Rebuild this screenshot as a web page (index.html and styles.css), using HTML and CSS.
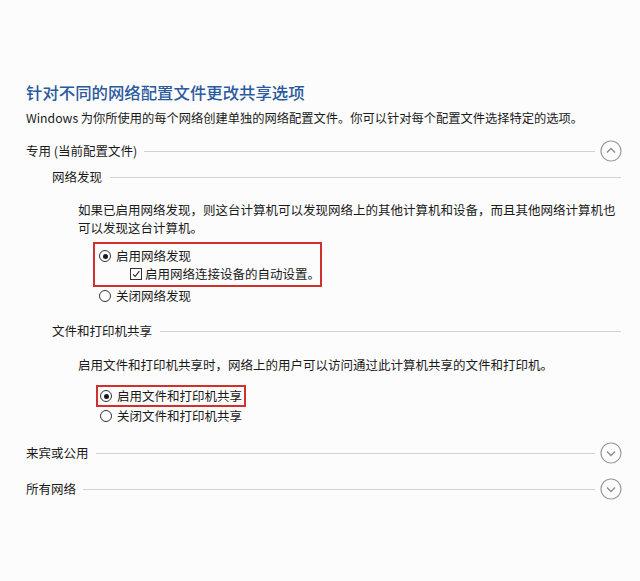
FILE: index.html
```html
<!DOCTYPE html>
<html lang="zh-CN">
<head>
<meta charset="utf-8">
<link rel="stylesheet" href="styles.css">
</head>
<body>
<div class="page">
  <h1 class="title">针对不同的网络配置文件更改共享选项</h1>
  <p class="desc">Windows 为你所使用的每个网络创建单独的网络配置文件。你可以针对每个配置文件选择特定的选项。</p>

  <div class="section-head first">
    <span class="section-label">专用 (当前配置文件)</span>
    <span class="rule"></span>
    <svg class="toggle" viewBox="0 0 22 22" width="22" height="22"><circle cx="11" cy="11" r="10" fill="none" stroke="#9a9a9a" stroke-width="1.2"/><path d="M7 12.5 L11 8.5 L15 12.5" fill="none" stroke="#8a8a8a" stroke-width="1.3"/></svg>
  </div>

  <div class="sub-head sub-first">
    <span class="sub-label">网络发现</span>
    <span class="rule"></span>
  </div>
  <p class="para para-first">如果已启用网络发现，则这台计算机可以发现网络上的其他计算机和设备，而且其他网络计算机也可以发现这台计算机。</p>

  <div class="hl-box hl-one">
    <div class="opt"><span class="radio checked"></span><span>启用网络发现</span></div>
    <div class="opt opt-check"><span class="check"><svg viewBox="0 0 12 12" width="12" height="12"><path d="M2.5 6.5 L5 9 L10 2.5" fill="none" stroke="#222" stroke-width="1.3"/></svg></span><span>启用网络连接设备的自动设置。</span></div>
  </div>
  <div class="opt opt-plain"><span class="radio"></span><span>关闭网络发现</span></div>

  <div class="sub-head sub-second">
    <span class="sub-label">文件和打印机共享</span>
    <span class="rule"></span>
  </div>
  <p class="para para-second">启用文件和打印机共享时，网络上的用户可以访问通过此计算机共享的文件和打印机。</p>

  <div class="hl-box hl-two">
    <div class="opt"><span class="radio checked"></span><span>启用文件和打印机共享</span></div>
  </div>
  <div class="opt opt-plain2"><span class="radio"></span><span>关闭文件和打印机共享</span></div>

  <div class="section-head guest">
    <span class="section-label">来宾或公用</span>
    <span class="rule"></span>
    <svg class="toggle" viewBox="0 0 22 22" width="22" height="22"><circle cx="11" cy="11" r="10" fill="none" stroke="#9a9a9a" stroke-width="1.2"/><path d="M7 9.5 L11 13.5 L15 9.5" fill="none" stroke="#8a8a8a" stroke-width="1.3"/></svg>
  </div>
  <div class="section-head all">
    <span class="section-label">所有网络</span>
    <span class="rule"></span>
    <svg class="toggle" viewBox="0 0 22 22" width="22" height="22"><circle cx="11" cy="11" r="10" fill="none" stroke="#9a9a9a" stroke-width="1.2"/><path d="M7 9.5 L11 13.5 L15 9.5" fill="none" stroke="#8a8a8a" stroke-width="1.3"/></svg>
  </div>
</div>
</body>
</html>
```

FILE: styles.css
```css
html, body {
  margin: 0;
  padding: 0;
  background: #fcfcfc;
}
body {
  font-family: "Noto Sans CJK SC", "Noto Sans", sans-serif;
  color: #1a1a1a;
  font-size: 12.5px;
  width: 640px;
  height: 581px;
  overflow: hidden;
}
.page {
  padding: 82px 18px 0 26px;
}
.title {
  margin: 0;
  font-size: 16.4px;
  line-height: 20px;
  font-weight: 500;
  color: #2b5a9e;
}
.desc {
  margin: 7px 0 0 0;
  line-height: 18px;
  white-space: nowrap;
  font-size: 12.25px;
}
.section-head {
  display: flex;
  align-items: center;
  height: 22px;
}
.section-head.first { margin-top: 13px; }
.section-head.guest { margin-top: 17px; }
.section-head.all { margin-top: 14px; }
.section-label {
  line-height: 22px;
  white-space: nowrap;
}
.rule {
  flex: 1;
  height: 1px;
  background: #d2d2d2;
  margin-left: 7px;
}
.toggle {
  margin-left: 5px;
  flex: none;
  display: block;
}
.sub-head {
  display: flex;
  align-items: center;
  height: 18px;
  padding-left: 26px;
  margin-right: 1px;
}
.sub-first { margin-top: 6px; }
.sub-second { margin-top: 17px; }
.sub-label {
  line-height: 18px;
  white-space: nowrap;
}
.sub-head .rule { margin-left: 8px; }
.para {
  margin: 0;
  padding-left: 52px;
  padding-right: 4px;
  line-height: 18px;
}
.para-first { margin-top: 15px; }
.para-second { margin-top: 16px; }
.hl-box {
  border: 2px solid #d0312d;
  width: fit-content;
}
.hl-one {
  margin-left: 67px;
  margin-top: 5px;
  padding: 3px 0 2px 4px;
}
.hl-two {
  margin-left: 70px;
  margin-top: 11px;
  padding: 0 2px 0 2px;
}
.opt {
  display: flex;
  align-items: center;
  height: 18px;
  line-height: 18px;
  white-space: nowrap;
}
.opt-check { padding-left: 31px; }
.opt-plain { margin-left: 73px; }
.opt-plain2 { margin-left: 74px; }
.radio {
  width: 12px;
  height: 12px;
  border: 1px solid #333;
  border-radius: 50%;
  box-sizing: border-box;
  margin-right: 5px;
  flex: none;
  position: relative;
  background: #fff;
}
.radio.checked::after {
  content: "";
  position: absolute;
  left: 2.5px;
  top: 2.5px;
  width: 5px;
  height: 5px;
  border-radius: 50%;
  background: #1a1a1a;
}
.check {
  width: 12px;
  height: 12px;
  border: 1px solid #333;
  box-sizing: border-box;
  margin-right: 3px;
  flex: none;
  display: flex;
  align-items: center;
  justify-content: center;
  background: #fff;
}
.check svg { display: block; width: 10px; height: 10px; }
```
